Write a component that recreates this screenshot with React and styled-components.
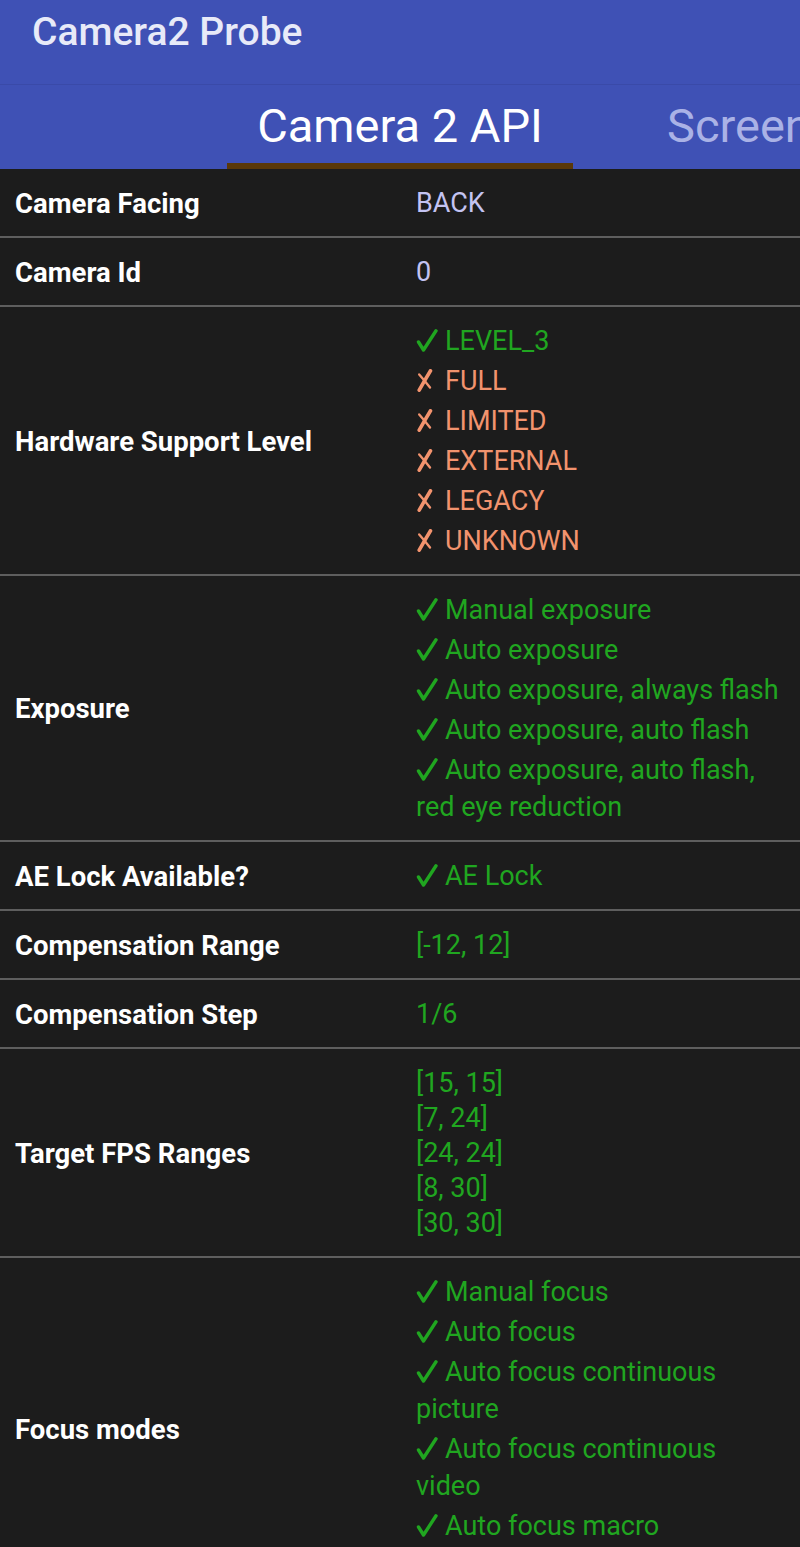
import React from 'react'
import styled, {createGlobalStyle} from 'styled-components'

const rows = [
    {label: 'Camera Facing', kind: 'plain', items: ['BACK']},
    {label: 'Camera Id', kind: 'plain', items: ['0']},
    {label: 'Hardware Support Level', kind: 'check', items: [
        [true, 'LEVEL_3'],
        [false, 'FULL'],
        [false, 'LIMITED'],
        [false, 'EXTERNAL'],
        [false, 'LEGACY'],
        [false, 'UNKNOWN'],
    ]},
    {label: 'Exposure', kind: 'check', items: [
        [true, 'Manual exposure'],
        [true, 'Auto exposure'],
        [true, 'Auto exposure, always flash'],
        [true, 'Auto exposure, auto flash'],
        [true, 'Auto exposure, auto flash, red eye reduction'],
    ]},
    {label: 'AE Lock Available?', kind: 'check', items: [[true, 'AE Lock']]},
    {label: 'Compensation Range', kind: 'ranges', items: ['[-12, 12]']},
    {label: 'Compensation Step', kind: 'ranges', items: ['1/6']},
    {label: 'Target FPS Ranges', kind: 'ranges', items: ['[15, 15]', '[7, 24]', '[24, 24]', '[8, 30]', '[30, 30]']},
    {label: 'Focus modes', kind: 'check', items: [
        [true, 'Manual focus'],
        [true, 'Auto focus'],
        [true, 'Auto focus continuous picture'],
        [true, 'Auto focus continuous video'],
        [true, 'Auto focus macro'],
        [true, 'Extended depth of field'],
    ]},
]

// tick / ballot-x drawn to match the android symbol glyphs
function Mark({ok}) {
    if (ok) {
        return (
            <MarkSvg width="22" height="23" viewBox="0 0 22 23">
                <path d="M2.5 13 L7.5 21 L20 1.8" fill="none" stroke="currentColor" strokeWidth="3.4" strokeLinejoin="round" strokeLinecap="round" />
            </MarkSvg>
        )
    }
    return (
        <MarkSvg width="22" height="23" viewBox="0 0 22 23">
            <path d="M14.5 1.8 Q9.5 10 3.2 21.2" fill="none" stroke="currentColor" strokeWidth="3.6" strokeLinecap="round" />
            <path d="M3.2 5.5 Q8.5 11.5 14 18.5" fill="none" stroke="currentColor" strokeWidth="2.4" strokeLinecap="round" />
        </MarkSvg>
    )
}

function Value({kind, items}) {
    if (kind === 'check') {
        return (
            <ValueList>
                {items.map(([ok, text]) => (
                    <CheckItem key={text} ok={ok}>
                        <Mark ok={ok} />{text}
                    </CheckItem>
                ))}
            </ValueList>
        )
    }
    if (kind === 'ranges') {
        return (
            <RangeList>
                {items.map((text) => <RangeLine key={text}>{text}</RangeLine>)}
            </RangeList>
        )
    }
    return <PlainValue>{items[0]}</PlainValue>
}

function App() {
    return (
        <Screen>
            <GlobalStyle />
            <AppBar>
                <AppTitle>Camera2 Probe</AppTitle>
            </AppBar>
            <TabStrip>
                <Tab active>Camera 2 API</Tab>
                <Tab>Screen</Tab>
            </TabStrip>
            <Table>
                {rows.map((row) => (
                    <Row key={row.label}>
                        <Label>{row.label}</Label>
                        <Value kind={row.kind} items={row.items} />
                    </Row>
                ))}
            </Table>
        </Screen>
    )
}

const GlobalStyle = createGlobalStyle`
    html, body {
        margin: 0;
        padding: 0;
        background: #1c1c1c;
    }
    body {
        font-family: Roboto, "Liberation Sans", sans-serif;
        overflow: hidden;
    }
`

const Screen = styled.div`
    width: 800px;
    height: 1547px;
    overflow: hidden;
    background: #1c1c1c;
`

const AppBar = styled.header`
    height: 85px;
    background: #3f51b5;
    display: flex;
    align-items: flex-start;
    padding-left: 32px;
    box-sizing: border-box;
    border-bottom: 1px solid #3a4aa8;
`

const AppTitle = styled.h1`
    margin: 9px 0 0;
    font-size: 39px;
    font-weight: 500;
    color: #e8eaf8;
    line-height: 46px;
`

const TabStrip = styled.nav`
    height: 84px;
    background: #3f51b5;
    display: flex;
    padding-left: 227px;
    overflow: hidden;
    box-sizing: border-box;
`

const Tab = styled.div`
    flex: none;
    box-sizing: border-box;
    height: 100%;
    width: ${(p) => (p.active ? '346px' : 'auto')};
    padding-left: ${(p) => (p.active ? '0' : '94px')};
    text-align: ${(p) => (p.active ? 'center' : 'left')};
    font-size: 47px;
    line-height: 82px;
    color: ${(p) => (p.active ? '#ffffff' : '#aab2e6')};
    border-bottom: 6px solid ${(p) => (p.active ? '#5a3808' : 'transparent')};
    white-space: nowrap;
`

const Table = styled.div`
    display: flex;
    flex-direction: column;
`

const Row = styled.div`
    display: grid;
    grid-template-columns: 416px 1fr;
    align-items: center;
    padding: 14px 0 13px;
    border-bottom: 2px solid #5e5e5e;
`

const Label = styled.div`
    padding-left: 15px;
    font-size: 27.5px;
    font-weight: 700;
    color: #ffffff;
`

const PlainValue = styled.div`
    font-size: 27px;
    line-height: 40px;
    color: #c3c3f2;
`

const ValueList = styled.div`
    display: flex;
    flex-direction: column;
    max-width: 364px;
`

const CheckItem = styled.div`
    font-size: 27px;
    line-height: 37px;
    padding: 1.5px 0;
    color: ${(p) => (p.ok ? '#20a620' : '#f2936e')};
`

const MarkSvg = styled.svg`
    display: inline-block;
    vertical-align: -2px;
    margin-right: 7px;
`

const RangeList = styled.div`
    display: flex;
    flex-direction: column;
    padding: 2.5px 0;
`

const RangeLine = styled.div`
    font-size: 27px;
    line-height: 35px;
    color: #20a620;
`

export default App
